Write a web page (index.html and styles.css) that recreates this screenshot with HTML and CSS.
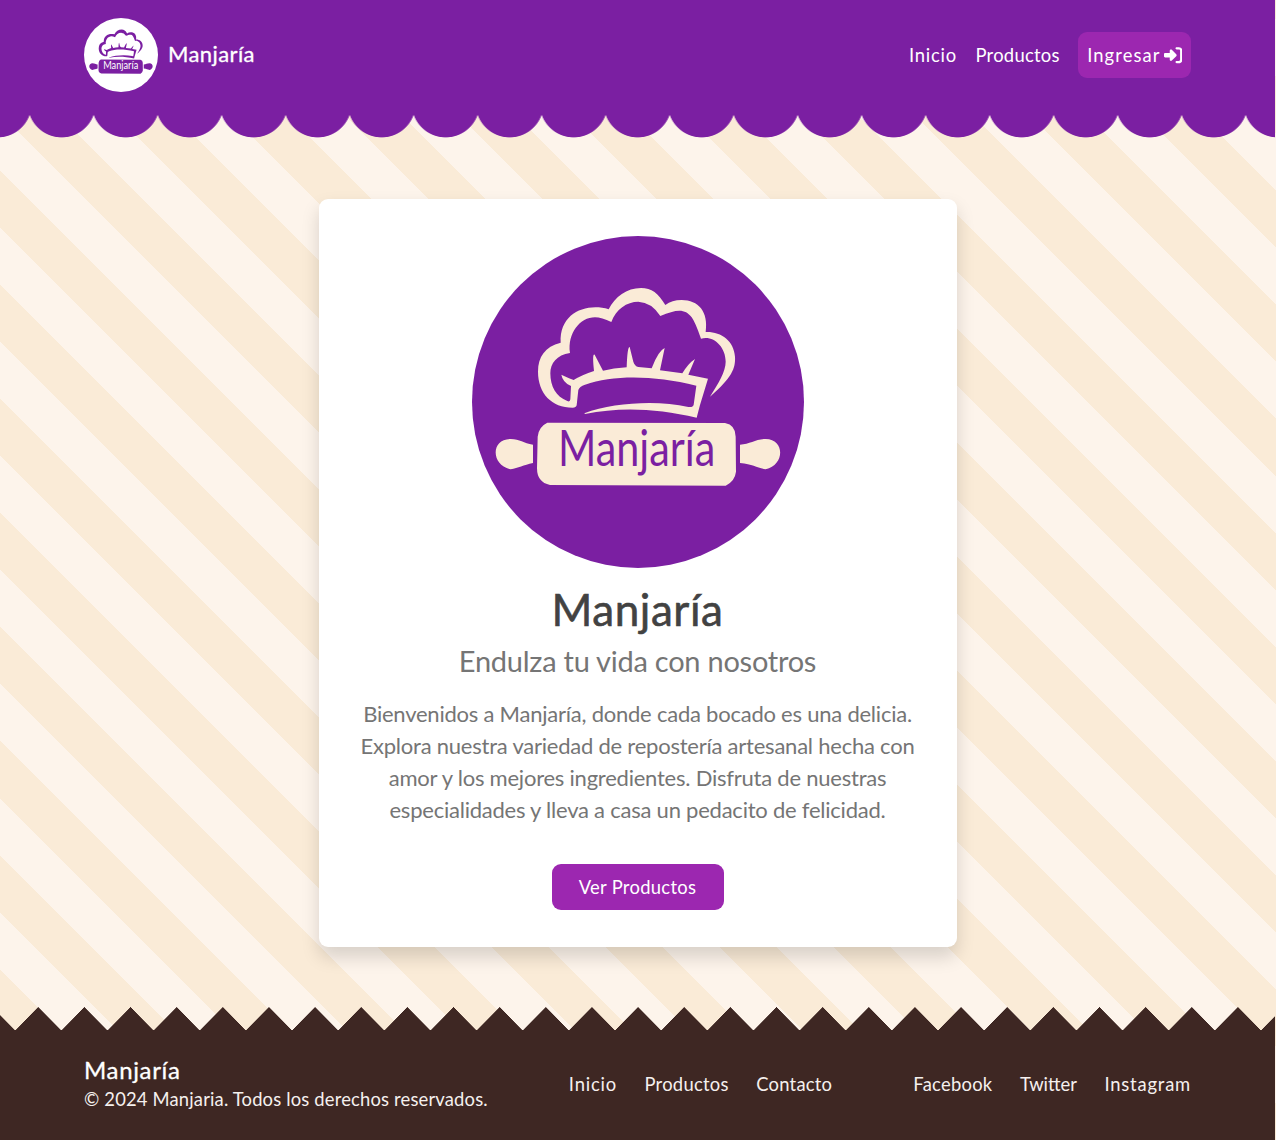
FILE: index.html
```html
<!DOCTYPE html>
<html lang="es">
<head>
<meta charset="utf-8">
<title>Manjaría</title>
<link rel="stylesheet" href="styles.css">
</head>
<body>
<svg class="defs" aria-hidden="true">
  <symbol id="logo" viewBox="6 18 996 996">
    <path fill="currentColor" d="M720 500C786 442 797 415 795 380C792 332 752 304 707 306C716 245 685 210 635 210C615 210 600 215 586 225C565 190 545 174 513 174C470 174 435 200 416 238C350 218 268 248 272 338C225 350 204 380 204 425C204 490 245 533 308 533Q318 533 320 526L325 480Q328 470 345 464C430 435 550 435 679 467L671 524Q669 533 655 531C560 510 430 518 343 550L345 552C450 530 560 535 680 563L690 525L714 446L655 434L675 387Q655 400 637 430L570 421L584 354Q565 362 545 415L505 411Q494 408 490 395L479 351Q472 350 470 412Q430 415 399 422L374 374Q366 368 372 423Q335 435 311 450Q285 440 274 434Q278 457 303 468L301 508Q300 517 292 513C258 500 241 470 241 430C241 400 260 375 300 369C292 310 330 262 375 262Q395 262 424 276C438 238 470 215 505 215Q545 217 571 258C620 237 645 235 665 262Q675 275 693 326C730 315 767 350 767 395C767 425 745 460 720 500Z"/>
    <path fill="currentColor" d="M232 578L765 579Q797 585 797 620L798 725Q795 753 767 767L240 765Q201 757 201 715L203 620Q206 590 232 578ZM189 644C160 640 150 627 122 627C62 627 62 705 122 718C145 713 160 706 189 699ZM810 644C840 643 857 627 887 627C946 627 944 707 887 718C860 713 850 703 810 699Z"/>
    <text class="logo-text" x="264" y="707" textLength="472" lengthAdjust="spacingAndGlyphs">Manjaría</text>
  </symbol>
</svg>
<header class="header">
  <div class="container header-row">
    <a class="brand"><svg class="brand-logo"><use href="#logo"/></svg><span class="brand-name">Manjaría</span></a>
    <nav class="nav">
      <a class="wide">Inicio</a>
      <a>Productos</a>
      <a class="login"><span>Ingresar</span><svg class="login-icon" viewBox="0 0 512 512"><path fill="currentColor" d="M217.900 105.900L340.700 228.700c7.200 7.200 11.300 17.100 11.300 27.300s-4.100 20.100-11.300 27.300L217.900 406.100c-6.400 6.400-15 9.900-24 9.900c-18.700 0-33.900-15.200-33.900-33.900l0-62.100L32 320c-17.700 0-32-14.300-32-32l0-64c0-17.700 14.300-32 32-32l128 0 0-62.100c0-18.700 15.200-33.900 33.900-33.900c9 0 17.600 3.600 24 9.900zM352 416l64 0c17.700 0 32-14.300 32-32l0-256c0-17.700-14.300-32-32-32l-64 0c-17.700 0-32-14.300-32-32s14.300-32 32-32l64 0c53 0 96 43 96 96l0 256c0 53-43 96-96 96l-64 0c-17.700 0-32-14.300-32-32s14.300-32 32-32z"/></svg></a>
    </nav>
  </div>
</header>
<main class="main">
  <section class="card">
    <svg class="hero-logo"><use href="#logo"/></svg>
    <h1 class="title">Manjaría</h1>
    <h2 class="subtitle">Endulza tu vida con nosotros</h2>
    <p class="text">Bienvenidos a Manjaría, donde cada bocado es una delicia.<br>Explora nuestra variedad de repostería artesanal hecha con<br>amor y los mejores ingredientes. Disfruta de nuestras<br>especialidades y lleva a casa un pedacito de felicidad.</p>
    <a class="button">Ver Productos</a>
  </section>
</main>
<footer class="footer">
  <div class="container footer-row">
    <div>
      <h3 class="footer-name">Manjaría</h3>
      <p class="copy">© 2024 Manjaria. Todos los derechos reservados.</p>
    </div>
    <nav class="links"><a class="wide">Inicio</a><a>Productos</a><a>Contacto</a></nav>
    <nav class="links"><a>Facebook</a><a class="plain">Twitter</a><a class="wide">Instagram</a></nav>
  </div>
</footer>
</body>
</html>
```
FILE: styles.css
```css
* { box-sizing: border-box; margin: 0; padding: 0; }
body {
  width: 1275px;
  height: 1140px;
  display: flex;
  flex-direction: column;
  font-family: Lato, "Open Sans", sans-serif;
  font-size: 18.4px;
  overflow: hidden;
  background: repeating-linear-gradient(45deg, #faebd7 -0.3px, #faebd7 40.05px, #fdf4eb 40.05px, #fdf4eb 80.41px);
}
.defs { position: absolute; width: 0; height: 0; }
.container { width: 1107px; margin: 0 auto; display: flex; align-items: center; justify-content: space-between; }
.header { position: relative; height: 110px; background: #7b1fa2; color: #fff; }
.header::after {
  content: "";
  position: absolute;
  top: 100%;
  left: 0;
  right: 0;
  height: 28px;
  background: radial-gradient(circle at 50% -6.5px, #7b1fa2 33.5px, transparent 34.3px) 29.7px 0 / 64px 28px repeat-x;
}
.header-row { height: 110px; }
.brand { display: flex; align-items: center; gap: 10px; }
.brand-logo { width: 74px; height: 74px; border-radius: 50%; background: #fff; color: #7b1fa2; --label: #fff; }
.brand-name { margin-bottom: 3px; font-size: 22px; letter-spacing: 0.4px; -webkit-text-stroke: 0.3px; }
.logo-text { font: 149px Lato, sans-serif; fill: var(--label); }
.nav { display: flex; align-items: center; gap: 18.5px; letter-spacing: 0.25px; }
.wide { letter-spacing: 0.8px; }
.plain { letter-spacing: 0; }
.login { display: flex; align-items: center; gap: 3px; height: 46px; padding: 0 9px; border-radius: 9px; background: #9c27b0; letter-spacing: 1.1px; }
.login-icon { width: 18.4px; height: 18.4px; }
.main { flex: 1; display: flex; justify-content: center; align-items: flex-start; padding-top: 89px; }
.card {
  width: 638px;
  height: 748px;
  padding-top: 37px;
  display: flex;
  flex-direction: column;
  align-items: center;
  text-align: center;
  background: #fff;
  border-radius: 9px;
  box-shadow: 0 9.2px 18.4px rgba(0, 0, 0, 0.15);
}
.hero-logo { width: 332px; height: 332px; flex: none; border-radius: 50%; background: #7b1fa2; color: #faebd7; --label: #7b1fa2; }
.title { margin-top: 13px; font-size: 44px; line-height: 56px; font-weight: 400; letter-spacing: 0.55px; color: #424242; -webkit-text-stroke: 0.6px; }
.subtitle { margin-top: 5px; font-size: 29px; line-height: 38px; font-weight: 400; letter-spacing: -0.25px; color: #757575; }
.text { margin-top: 17.5px; font-size: 22px; line-height: 32.2px; letter-spacing: -0.23px; color: #757575; }
.button { margin-top: 37.7px; width: 172px; height: 46px; line-height: 46px; letter-spacing: 0.3px; border-radius: 9px; background: #9c27b0; color: #fff; }
.footer { position: relative; height: 110px; background: #3e2723; color: #fff; }
.footer::before {
  content: "";
  position: absolute;
  bottom: 100%;
  left: 0;
  right: 0;
  height: 23px;
  background: conic-gradient(from 135deg at 50% 0, #3e2723 90deg, transparent 0) 15.2px 0 / 46.15px 23px repeat-x;
}
.footer-row { height: 108px; }
.footer-name { font-size: 24px; line-height: 29px; font-weight: 400; letter-spacing: 0.65px; -webkit-text-stroke: 0.3px; }
.copy { line-height: 30px; letter-spacing: 0.17px; color: #f5f0ee; }
.links { display: flex; gap: 27.5px; letter-spacing: 0.25px; color: #f5f0ee; }
```
